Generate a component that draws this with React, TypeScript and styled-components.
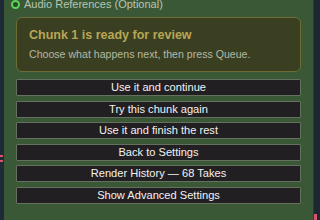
import React from 'react';
import styled, {createGlobalStyle} from 'styled-components';

// ── Global ─────────────────────────────────────────────────────────

const GlobalStyle = createGlobalStyle`
  html, body {
    margin: 0;
    padding: 0;
    background: #1d2a36;
    overflow: hidden;
  }
  body {
    font-family: 'Liberation Sans', Arial, sans-serif;
  }
`;

// ── Styled components ──────────────────────────────────────────────

const Frame = styled.div`
  display: flex;
  width: 320px;
  height: 220px;
  overflow: hidden;
`;

const LeftGutter = styled.div`
  width: 4px;
  flex-shrink: 0;
  background: #1e2b37;
  display: flex;
  flex-direction: column;
  padding-top: 155px;
  gap: 3px;
`;

const RightGutter = styled.div`
  width: 6px;
  flex-shrink: 0;
  background: #1c2733;
  border-left: 1px solid #2c3945;
  display: flex;
  flex-direction: column;
  justify-content: flex-end;
`;

const RedTick = styled.span<{$h: number}>`
  display: block;
  width: 3px;
  height: ${p => p.$h}px;
  background: #d9546a;
`;

const Panel = styled.div`
  flex: 1;
  background: #3a5836;
  display: flex;
  flex-direction: column;
  padding: 0 12px 0 12px;
`;

const Header = styled.div`
  display: flex;
  align-items: center;
  gap: 4px;
  margin: -3px 0 0 -5px;
  height: 14px;
`;

const RadioDot = styled.span`
  width: 5px;
  height: 5px;
  border-radius: 50%;
  border: 2px solid #5fd35a;
  background: #2c4a2a;
  flex-shrink: 0;
`;

const HeaderLabel = styled.span`
  font-size: 11px;
  color: #b9c4b4;
  white-space: nowrap;
`;

const Body = styled.div`
  display: flex;
  flex-direction: column;
  margin-top: 6px;
`;

const Callout = styled.div`
  display: flex;
  flex-direction: column;
  height: 55px;
  box-sizing: border-box;
  padding: 10px 12px 0 12px;
  background: #3b3f22;
  border: 1px solid #6d6c34;
  border-radius: 6px;
`;

const CalloutTitle = styled.div`
  font-size: 12.5px;
  font-weight: 700;
  color: #b7a655;
  line-height: 14px;
`;

const CalloutText = styled.div`
  margin-top: 6px;
  font-size: 10.6px;
  color: #b4b8a2;
  line-height: 13px;
  white-space: nowrap;
`;

const ActionList = styled.div`
  display: flex;
  flex-direction: column;
  gap: 4.5px;
  margin-top: 7px;
`;

const ActionButton = styled.button`
  height: 17px;
  box-sizing: border-box;
  padding: 0;
  background: #221f23;
  border: 1px solid #66705f;
  border-radius: 1px;
  color: #f2f2f2;
  font-family: 'Liberation Sans', Arial, sans-serif;
  font-size: 11.1px;
  font-weight: 400;
  line-height: 15px;
  text-align: center;
  cursor: pointer;
`;

// ── Component ──────────────────────────────────────────────────────

const actions = [
  'Use it and continue',
  'Try this chunk again',
  'Use it and finish the rest',
  'Back to Settings',
  'Render History \u2014 68 Takes',
  'Show Advanced Settings',
];

export default function App() {
  return (
    <>
      <GlobalStyle />
      <Frame>
        <LeftGutter>
          <RedTick $h={2} />
          <RedTick $h={2} />
        </LeftGutter>
        <Panel>
          <Header>
            <RadioDot />
            <HeaderLabel>Audio References (Optional)</HeaderLabel>
          </Header>
          <Body>
            <Callout>
              <CalloutTitle>Chunk 1 is ready for review</CalloutTitle>
              <CalloutText>
                Choose what happens next, then press Queue.
              </CalloutText>
            </Callout>
            <ActionList>
              {actions.map(label => (
                <ActionButton key={label}>{label}</ActionButton>
              ))}
            </ActionList>
          </Body>
        </Panel>
        <RightGutter>
          <RedTick $h={6} />
        </RightGutter>
      </Frame>
    </>
  );
}
